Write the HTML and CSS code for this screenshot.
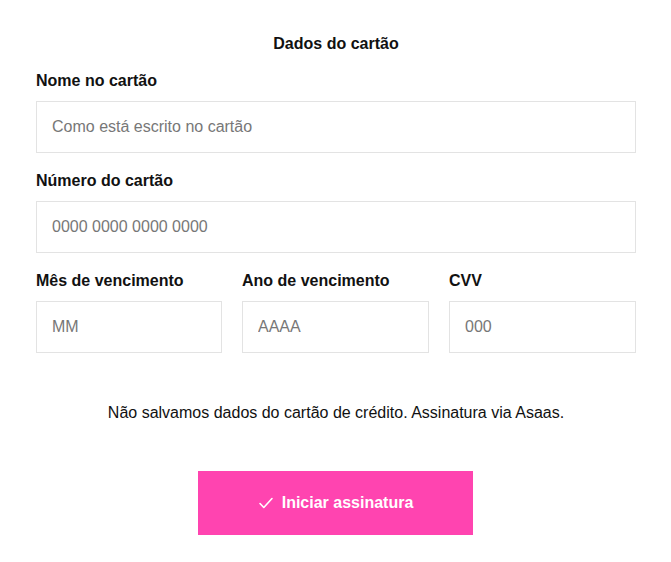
FILE: index.html
```html
<!DOCTYPE html>
<html lang="pt-BR">
<head>
<meta charset="utf-8">
<link rel="stylesheet" href="styles.css">
</head>
<body>
<form class="card-form">
  <h2 class="title">Dados do cartão</h2>
  <div class="field">
    <label class="label">Nome no cartão</label>
    <input class="input" type="text" placeholder="Como está escrito no cartão">
  </div>
  <div class="field">
    <label class="label">Número do cartão</label>
    <input class="input" type="text" placeholder="0000 0000 0000 0000">
  </div>
  <div class="row">
    <div class="field">
      <label class="label">Mês de vencimento</label>
      <input class="input" type="text" placeholder="MM">
    </div>
    <div class="field">
      <label class="label">Ano de vencimento</label>
      <input class="input" type="text" placeholder="AAAA">
    </div>
    <div class="field">
      <label class="label">CVV</label>
      <input class="input" type="text" placeholder="000">
    </div>
  </div>
  <p class="note">Não salvamos dados do cartão de crédito. Assinatura via Asaas.</p>
  <div class="actions">
    <button type="button" class="submit">
      <svg class="check" width="16" height="16" viewBox="0 0 16 16" fill="none" stroke="#fff" stroke-width="1.6" stroke-linecap="round" stroke-linejoin="round"><path d="M2 8.5l3.8 4L14 3.5"/></svg>
      <span>Iniciar assinatura</span>
    </button>
  </div>
</form>
</body>
</html>
```
FILE: styles.css
```css
* { box-sizing: border-box; }
html, body { margin: 0; padding: 0; background: #fff; }
body {
  font-family: "Liberation Sans", Arial, sans-serif;
  color: #111;
}
.card-form {
  width: 600px;
  margin: 0 0 0 36px;
  padding-top: 32px;
  display: flex;
  flex-direction: column;
}
.title {
  margin: 0 0 13px;
  font-size: 16px;
  line-height: 24px;
  font-weight: bold;
  text-align: center;
}
.field {
  display: flex;
  flex-direction: column;
  margin-bottom: 16px;
}
.label {
  font-size: 16px;
  line-height: 24px;
  font-weight: bold;
  margin-bottom: 8px;
}
.input {
  height: 52px;
  border: 1px solid #e3e3e3;
  border-radius: 0;
  padding: 0 15px;
  font-family: inherit;
  font-size: 16px;
  color: #111;
  background: #fff;
  outline: none;
  width: 100%;
}
.input::placeholder { color: #777; opacity: 1; }
.row {
  display: grid;
  grid-template-columns: 186px 187px 187px;
  column-gap: 20px;
}
.note {
  margin: 32px 0 0;
  font-size: 16px;
  line-height: 24px;
  text-align: center;
}
.actions {
  display: flex;
  justify-content: center;
  margin-top: 46px;
}
.submit {
  width: 275px;
  height: 64px;
  margin-right: 1px;
  border: none;
  border-radius: 0;
  background: #ff44b0;
  color: #fff;
  font-family: inherit;
  font-size: 16px;
  font-weight: bold;
  display: flex;
  align-items: center;
  justify-content: center;
  gap: 8px;
  cursor: pointer;
}
.check { display: block; }
```
